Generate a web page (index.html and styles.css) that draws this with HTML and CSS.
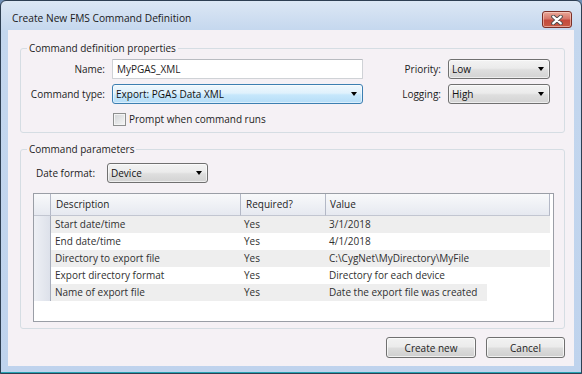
FILE: index.html
```html
<!DOCTYPE html>
<html lang="en">
<head>
<meta charset="utf-8">
<title>Create New FMS Command Definition</title>
<link rel="stylesheet" href="styles.css">
</head>
<body>
<div class="window">
  <div class="titlebar">
    <span class="title">Create New FMS Command Definition</span>
    <div class="close">
      <svg width="12" height="10" viewBox="0 0 12 10"><path d="M2.2 1.6L9.8 8.4M9.8 1.6L2.2 8.4" stroke="#4a4a4a" stroke-width="4" stroke-linecap="round" fill="none"/><path d="M2.2 1.6L9.8 8.4M9.8 1.6L2.2 8.4" stroke="#ffffff" stroke-width="2.2" stroke-linecap="round" fill="none"/></svg>
    </div>
  </div>
  <div class="client">
    <fieldset class="group group-props">
      <legend>Command definition properties</legend>
      <div class="props">
        <span class="lbl">Name:</span>
        <div class="textbox">MyPGAS_XML</div>
        <span></span>
        <span class="lbl">Priority:</span>
        <div class="combo">Low<i class="arrow"></i></div>
        <span class="lbl">Command type:</span>
        <div class="combo combo-hot">Export: PGAS Data XML<i class="arrow"></i></div>
        <span></span>
        <span class="lbl">Logging:</span>
        <div class="combo">High<i class="arrow"></i></div>
        <span></span>
        <div class="check"><span class="box"></span>Prompt when command runs</div>
      </div>
    </fieldset>
    <fieldset class="group group-params">
      <legend>Command parameters</legend>
      <div class="params-body">
        <div class="daterow">
          <span class="datelbl">Date format:</span>
          <div class="combo combo-date">Device<i class="arrow"></i></div>
        </div>
        <div class="grid">
          <div class="row head">
            <div class="rh"></div><div class="c c1">Description</div><div class="c c2">Required?</div><div class="c c3">Value</div>
          </div>
          <div class="row alt">
            <div class="rh"></div><div class="c c1">Start date/time</div><div class="c c2">Yes</div><div class="c c3">3/1/2018</div>
          </div>
          <div class="row">
            <div class="rh"></div><div class="c c1">End date/time</div><div class="c c2">Yes</div><div class="c c3">4/1/2018</div>
          </div>
          <div class="row alt">
            <div class="rh"></div><div class="c c1">Directory to export file</div><div class="c c2">Yes</div><div class="c c3">C:\CygNet\MyDirectory\MyFile</div>
          </div>
          <div class="row">
            <div class="rh"></div><div class="c c1">Export directory format</div><div class="c c2">Yes</div><div class="c c3">Directory for each device</div>
          </div>
          <div class="row alt last">
            <div class="rh"></div><div class="c c1">Name of export file</div><div class="c c2">Yes</div><div class="c c3">Date the export file was created</div>
          </div>
        </div>
      </div>
    </fieldset>
    <div class="buttons">
      <button class="btn btn-create">Create new</button>
      <button class="btn btn-cancel">Cancel</button>
    </div>
  </div>
</div>
</body>
</html>
```

FILE: styles.css
```css
* { box-sizing: border-box; }
html, body { margin: 0; padding: 0; }
body {
  width: 582px;
  height: 374px;
  overflow: hidden;
  background: #6f8fb5;
  font-family: "Open Sans", "Noto Sans", sans-serif;
  font-size: 10px;
  color: #1c1c1c;
}
.window {
  width: 582px;
  height: 374px;
  border: 1px solid #2e3f52;
  border-radius: 6px 6px 0 0;
  background: linear-gradient(#dce7f4, #c4d7ee 30px, #bfd3ed);
  box-shadow: inset 0 -1px 0 #27a3b3;
  padding: 0 7px 7px 7px;
  display: flex;
  flex-direction: column;
}
.titlebar {
  height: 29px;
  margin: 0 -7px;
  display: flex;
  align-items: flex-start;
  justify-content: space-between;
}
.title {
  padding: 10px 0 0 11px;
  line-height: 14px;
  font-size: 10.2px;
  color: #1a1a1a;
}
.close {
  margin: 10px 9px 0 0;
  width: 30px;
  height: 17px;
  border: 1px solid #7b2f27;
  border-radius: 3px;
  background: linear-gradient(#e9a898, #d7776a 45%, #c44a3c 55%, #c85a44);
  box-shadow: inset 0 0 0 1px rgba(255, 220, 210, 0.55);
  display: flex;
  align-items: center;
  justify-content: center;
}
.client {
  flex: 1;
  background: #f5f1f5;
  padding: 11px 9px 0 12px;
  display: flex;
  flex-direction: column;
}
.group {
  margin: 0;
  min-width: 0;
  border: 1px solid #d5dde3;
  border-radius: 3px;
}
.group legend {
  margin-left: 6px;
  padding: 0 2px;
  line-height: 14px;
  color: #1c1c1c;
}
.group-props {
  padding: 4px 14px 3px 0;
}
.props {
  display: grid;
  grid-template-columns: 84px 251px 1fr auto 102px;
  grid-template-rows: 20px 20px 20px;
  column-gap: 7px;
  row-gap: 5px;
  align-items: center;
}
.lbl {
  justify-self: end;
  line-height: 14px;
}
.textbox {
  height: 20px;
  border: 1px solid #cfd2d6;
  border-top-color: #b9bcc1;
  background: #fff;
  padding-left: 4px;
  line-height: 18px;
  border-radius: 1px;
}
.combo {
  height: 20px;
  border: 1px solid #707070;
  border-radius: 3px;
  background: linear-gradient(#f3f3f3, #ebebeb 45%, #dedede 55%, #d3d3d3);
  box-shadow: inset 0 0 0 1px rgba(255,255,255,0.6);
  padding-left: 3px;
  line-height: 18px;
  display: flex;
  align-items: center;
  color: #111;
}
.combo-hot {
  border-color: #3c7fb1;
  background: linear-gradient(#f0f8fd, #dff1fc 45%, #c6e7fb 55%, #b5ddf7);
  box-shadow: inset 0 0 0 1px rgba(255,255,255,0.5);
}
.arrow {
  margin-left: auto;
  margin-right: 5px;
  width: 0;
  height: 0;
  border-left: 3.5px solid transparent;
  border-right: 3.5px solid transparent;
  border-top: 4px solid #000;
}
.check {
  grid-column: 2 / span 2;
  display: flex;
  align-items: center;
  line-height: 14px;
}
.box {
  width: 13px;
  height: 13px;
  margin: 0 3px 0 1px;
  border: 1px solid #8e8f8f;
  background: linear-gradient(135deg, #d2d4d6, #f6f6f6);
  box-shadow: inset 0 0 0 1px #f4f4f4;
}
.group-params {
  margin-top: 9px;
  padding: 7px 10px 6px 0;
}
.params-body {
  padding-left: 12px;
}
.daterow {
  display: flex;
  align-items: center;
  height: 20px;
}
.datelbl {
  width: 74px;
  padding-left: 3px;
  line-height: 14px;
}
.combo-date {
  width: 101px;
}
.grid {
  margin-top: 10px;
  height: 129px;
  border: 1px solid #9a9ea6;
  background: #fff;
  color: #303030;
}
.row {
  display: grid;
  grid-template-columns: 17px 190px 85px 224px;
  height: 17px;
  line-height: 17px;
}
.row .c {
  white-space: nowrap;
  overflow: hidden;
  padding-left: 3px;
}
.row .c1 { padding-left: 4px; }
.row .rh {
  background: linear-gradient(to right, #eef0f5, #dde1ea);
  border-right: 1px solid #a7adbb;
}
.row.alt .c { background: #eeeeee; }
.row.last .c3 { background: linear-gradient(to right, #eeeeee 161px, #fff 161px); }
.row.head {
  height: 22px;
  line-height: 20px;
}
.row.head .rh, .row.head .c {
  background: linear-gradient(#f8f9fb, #e6e9f0);
  border-bottom: 1px solid #c2c6d1;
  border-right: 1px solid #b3b8c6;
  color: #1e1e1e;
}
.row.head .c { padding-left: 5px; }
.row.head .c3 { padding-left: 4px; }
.buttons {
  margin-top: 8px;
  display: flex;
  justify-content: flex-end;
  gap: 10px;
}
.btn {
  height: 21px;
  margin: 0;
  padding: 0;
  border: 1px solid #707070;
  border-radius: 3px;
  background: linear-gradient(#f2f2f2, #ebebeb 48%, #dddddd 52%, #cfcfcf);
  box-shadow: inset 0 0 0 1px rgba(255,255,255,0.7);
  font-family: "Open Sans", "Noto Sans", sans-serif;
  font-size: 10px;
  color: #1c1c1c;
  line-height: 18px;
}
.btn-create { width: 90px; }
.btn-cancel { width: 79px; }
```
